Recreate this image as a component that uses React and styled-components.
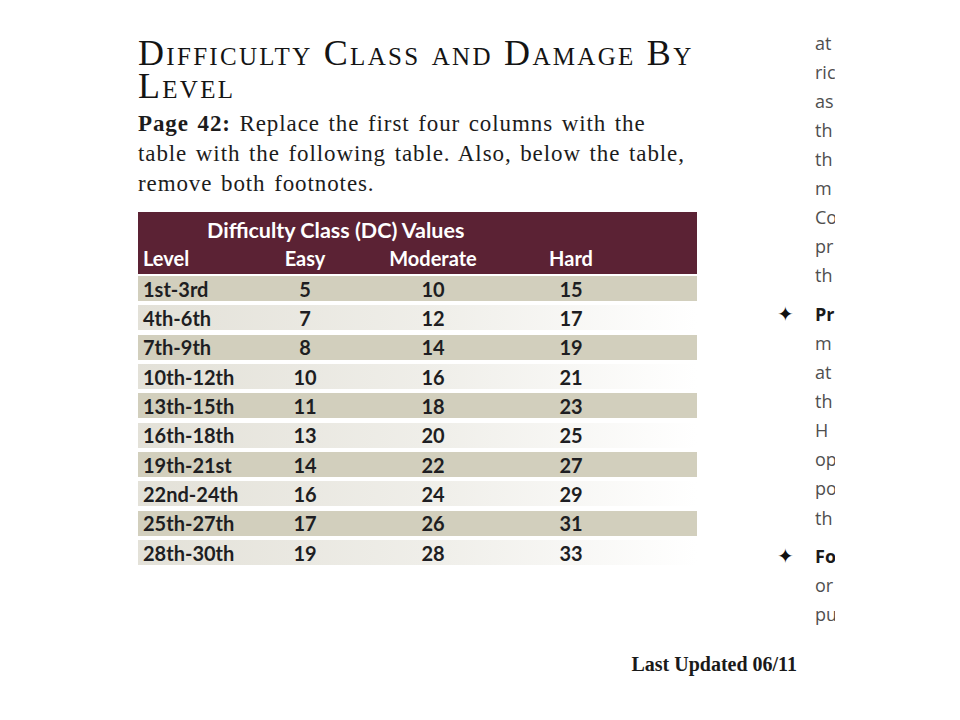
import React from 'react';
import styled, { createGlobalStyle } from 'styled-components';

const GlobalStyle = createGlobalStyle`
  body {
    margin: 0;
    background: #ffffff;
  }
`;

const Page = styled.div`
  width: 960px;
  height: 720px;
  overflow: hidden;
  background: #ffffff;
  display: flex;
  flex-direction: column;
`;

const Columns = styled.div`
  display: flex;
  align-items: flex-start;
  padding-left: 138px;
`;

const LeftColumn = styled.div`
  width: 559px;
  padding-top: 37px;
`;

const Title = styled.h2`
  margin: 0;
  font-family: 'Liberation Serif', serif;
  font-variant: small-caps;
  font-weight: normal;
  font-size: 36px;
  line-height: 33px;
  letter-spacing: 2.3px;
  color: #141414;
`;

const Intro = styled.p`
  margin: 6px 0 0;
  font-family: 'Liberation Serif', serif;
  font-size: 23px;
  line-height: 30px;
  letter-spacing: 0.9px;
  word-spacing: 2px;
  color: #1c1c1c;
  white-space: nowrap;

  b {
    font-weight: bold;
  }
`;

const Table = styled.div`
  margin-top: 13px;
  display: flex;
  flex-direction: column;
  font-family: Lato, 'Open Sans', sans-serif;
  font-weight: bold;
  font-size: 20px;
  color: #1e1e22;
`;

const Head = styled.div`
  background: #5b2234;
  color: #ffffff;
  height: 62px;
  display: flex;
  flex-direction: column;
  justify-content: flex-end;
  padding-bottom: 2px;
  box-sizing: border-box;
`;

const HeadTitle = styled.div`
  padding-left: 69px;
  font-size: 21.5px;
  line-height: 28px;
`;

const grid = `
  display: grid;
  grid-template-columns: 120px 94px 162px 114px 1fr;
  align-items: center;
`;

const HeadRow = styled.div`
  ${grid}
  line-height: 28px;
`;

const Row = styled.div`
  ${grid}
  height: 25px;
  margin-top: ${p => (p.first ? '2px' : '4.35px')};
  background: ${p => (p.shaded ? '#d2cfbd' : 'linear-gradient(90deg, #e3e1d8 0%, #f0efea 55%, #ffffff 100%)')};
`;

const Cell = styled.div`
  text-align: ${p => (p.left ? 'left' : 'center')};
  padding-left: ${p => (p.left ? '5px' : '0')};
  white-space: nowrap;
`;

const RightColumn = styled.div`
  margin-left: 83px;
  padding-top: 28px;
  display: flex;
  flex-direction: column;
`;

const Line = styled.div`
  display: flex;
  align-items: center;
  height: 29.1px;
  margin-top: ${p => (p.bullet ? '9.5px' : '0')};
`;

const Bullet = styled.span`
  width: 35px;
  font-size: 20px;
  color: #111;
  font-family: 'DejaVu Sans', sans-serif;
  margin-left: -3px;
  margin-right: 3px;
`;

const Clip = styled.span`
  width: 20px;
  overflow: hidden;
  white-space: nowrap;
  font-family: 'Open Sans', sans-serif;
  font-size: 18px;
  font-weight: ${p => (p.bold ? 'bold' : 'normal')};
  color: ${p => (p.bold ? '#1a1a1a' : '#4f4f4f')};
`;

const Footer = styled.div`
  display: flex;
  justify-content: flex-end;
  padding-right: 163px;
  margin-top: 24px;
  font-family: 'Liberation Serif', serif;
  font-weight: bold;
  font-size: 20px;
  color: #1a1a1a;
`;

const rows = [
  ['1st-3rd', 5, 10, 15],
  ['4th-6th', 7, 12, 17],
  ['7th-9th', 8, 14, 19],
  ['10th-12th', 10, 16, 21],
  ['13th-15th', 11, 18, 23],
  ['16th-18th', 13, 20, 25],
  ['19th-21st', 14, 22, 27],
  ['22nd-24th', 16, 24, 29],
  ['25th-27th', 17, 26, 31],
  ['28th-30th', 19, 28, 33]
];

const sideText = [
  ['at'],
  ['ric'],
  ['as'],
  ['th'],
  ['th'],
  ['m'],
  ['Co'],
  ['pr'],
  ['th'],
  ['Pr', true],
  ['m'],
  ['at'],
  ['th'],
  ['H'],
  ['op'],
  ['po'],
  ['th'],
  ['Fo', true],
  ['or'],
  ['pu']
];

export default function App() {
  return (
    <Page>
      <GlobalStyle />
      <Columns>
        <LeftColumn>
          <Title>Difficulty Class and Damage By Level</Title>
          <Intro>
            <b>Page 42:</b> Replace the first four columns with the
            <br />
            table with the following table. Also, below the table,
            <br />
            remove both footnotes.
          </Intro>
          <Table>
            <Head>
              <HeadTitle>Difficulty Class (DC) Values</HeadTitle>
              <HeadRow>
                <Cell left>Level</Cell>
                <Cell>Easy</Cell>
                <Cell>Moderate</Cell>
                <Cell>Hard</Cell>
              </HeadRow>
            </Head>
            {rows.map(([level, easy, moderate, hard], i) => (
              <Row key={level} first={i === 0} shaded={i % 2 === 0}>
                <Cell left>{level}</Cell>
                <Cell>{easy}</Cell>
                <Cell>{moderate}</Cell>
                <Cell>{hard}</Cell>
              </Row>
            ))}
          </Table>
        </LeftColumn>
        <RightColumn>
          {sideText.map(([word, bold], i) => (
            <Line key={i} bullet={bold}>
              <Bullet>{bold ? '✦' : ''}</Bullet>
              <Clip bold={bold}>{word}</Clip>
            </Line>
          ))}
        </RightColumn>
      </Columns>
      <Footer>Last Updated 06/11</Footer>
    </Page>
  );
}
